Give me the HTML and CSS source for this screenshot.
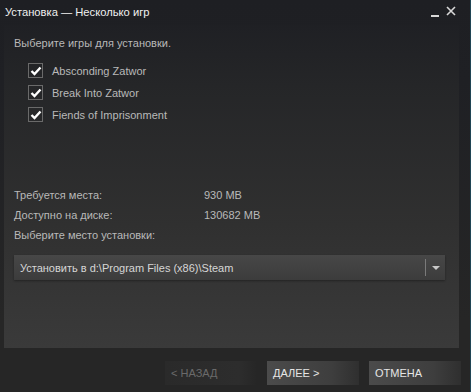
FILE: index.html
```html
<!DOCTYPE html>
<html lang="ru">
<head>
    <meta charset="UTF-8">
    <title>Установка — Несколько игр</title>
    <link rel="stylesheet" href="styles.css">
</head>
<body>
    <div class="window">
        <header class="titlebar">
            <div class="title">Установка — Несколько игр</div>
            <div class="controls">
                <span class="min"></span>
                <svg class="close" width="10" height="10" viewBox="0 0 10 10">
                    <path d="M1 1 L9 9 M9 1 L1 9" stroke="#d8d8d8" stroke-width="1.6"/>
                </svg>
            </div>
        </header>
        <main class="panel">
            <p class="lead">Выберите игры для установки.</p>
            <ul class="games">
                <li><span class="check"><svg width="12" height="10" viewBox="0 0 12 10"><path d="M1.5 5 L4.5 8 L10.5 1.5" fill="none" stroke="#fff" stroke-width="2.4"/></svg></span>Absconding Zatwor</li>
                <li><span class="check"><svg width="12" height="10" viewBox="0 0 12 10"><path d="M1.5 5 L4.5 8 L10.5 1.5" fill="none" stroke="#fff" stroke-width="2.4"/></svg></span>Break Into Zatwor</li>
                <li><span class="check"><svg width="12" height="10" viewBox="0 0 12 10"><path d="M1.5 5 L4.5 8 L10.5 1.5" fill="none" stroke="#fff" stroke-width="2.4"/></svg></span>Fiends of Imprisonment</li>
            </ul>
            <div class="info">
                <div class="row"><span class="label">Требуется места:</span><span>930 MB</span></div>
                <div class="row"><span class="label">Доступно на диске:</span><span>130682 MB</span></div>
                <div class="row"><span class="label">Выберите место установки:</span></div>
            </div>
            <div class="select">
                <span class="select-text">Установить в d:\Program Files (x86)\Steam</span>
                <span class="select-arrow"></span>
            </div>
        </main>
        <footer class="buttons">
            <button class="btn disabled">&lt; НАЗАД</button>
            <button class="btn">ДАЛЕЕ &gt;</button>
            <button class="btn">ОТМЕНА</button>
        </footer>
    </div>
</body>
</html>
```
FILE: styles.css
```css
* {
    box-sizing: border-box;
    margin: 0;
    padding: 0;
}
body {
    font-family: 'Liberation Sans', Arial, sans-serif;
    font-size: 11px;
    background-color: #262626;
    width: 471px;
    height: 392px;
    overflow: hidden;
}
.window {
    width: 471px;
    height: 392px;
    display: flex;
    flex-direction: column;
    background: linear-gradient(#1e1f23 0, #1f2024 80px, #262626 320px);
    border-right: 1px solid #1f4454;
    padding-right: 2px;
}
.titlebar {
    height: 25px;
    display: flex;
    align-items: center;
    justify-content: space-between;
    padding: 0 12px 2px 5px;
}
.title {
    color: #f0f0f0;
    font-size: 11.2px;
}
.controls {
    display: flex;
    align-items: center;
    gap: 7px;
}
.min {
    width: 8px;
    height: 2px;
    background-color: #d8d8d8;
    margin-top: 8px;
}
.close {
    margin-top: -2px;
}
.panel {
    height: 323px;
    margin: 0 9px 0 4px;
    background: linear-gradient(#1f2024 0, #252628 60px, #303030 200px, #3a3a3a 323px);
    padding: 11px 14px 0 10px;
    color: #b9b9b9;
}
.lead {
    height: 14px;
    line-height: 14px;
}
.games {
    list-style: none;
    margin-top: 13px;
    padding-left: 14px;
}
.games li {
    display: flex;
    align-items: center;
    height: 15px;
    margin-bottom: 7px;
    gap: 9px;
}
.check {
    width: 15px;
    height: 15px;
    border: 1px solid #6a6a6a;
    display: flex;
    align-items: center;
    justify-content: center;
}
.info {
    margin-top: 63px;
}
.row {
    display: flex;
    height: 20px;
    line-height: 20px;
}
.label {
    width: 190px;
}
.select {
    margin-top: 10px;
    height: 25px;
    display: flex;
    align-items: center;
    background: linear-gradient(#474747, #3c3c3c);
    color: #d6d6d6;
    box-shadow: 0 1px 2px rgba(0, 0, 0, 0.35);
}
.select-text {
    flex: 1;
    padding-left: 6px;
}
.select-arrow {
    width: 20px;
    height: 17px;
    border-left: 1px solid #7a7a7a;
    position: relative;
}
.select-arrow::after {
    content: '';
    position: absolute;
    left: 6px;
    top: 7px;
    border-left: 4px solid transparent;
    border-right: 4px solid transparent;
    border-top: 4px solid #c8c8c8;
}
.buttons {
    flex: 1;
    display: flex;
    justify-content: flex-end;
    align-items: flex-start;
    gap: 10px;
    padding: 13px 7px 0 0;
}
.btn {
    width: 92px;
    height: 24px;
    border: none;
    font-family: 'Liberation Sans', Arial, sans-serif;
    font-size: 11px;
    text-align: left;
    padding-left: 6px;
    color: #e6e6e6;
    background: linear-gradient(90deg, #4b4b4b, #3e3e3e 70%, #2f2f2f);
}
.btn.disabled {
    color: #6a6a6a;
    background: linear-gradient(90deg, #2a2a2a, #2d2d2d 80%, #262626);
}
```
